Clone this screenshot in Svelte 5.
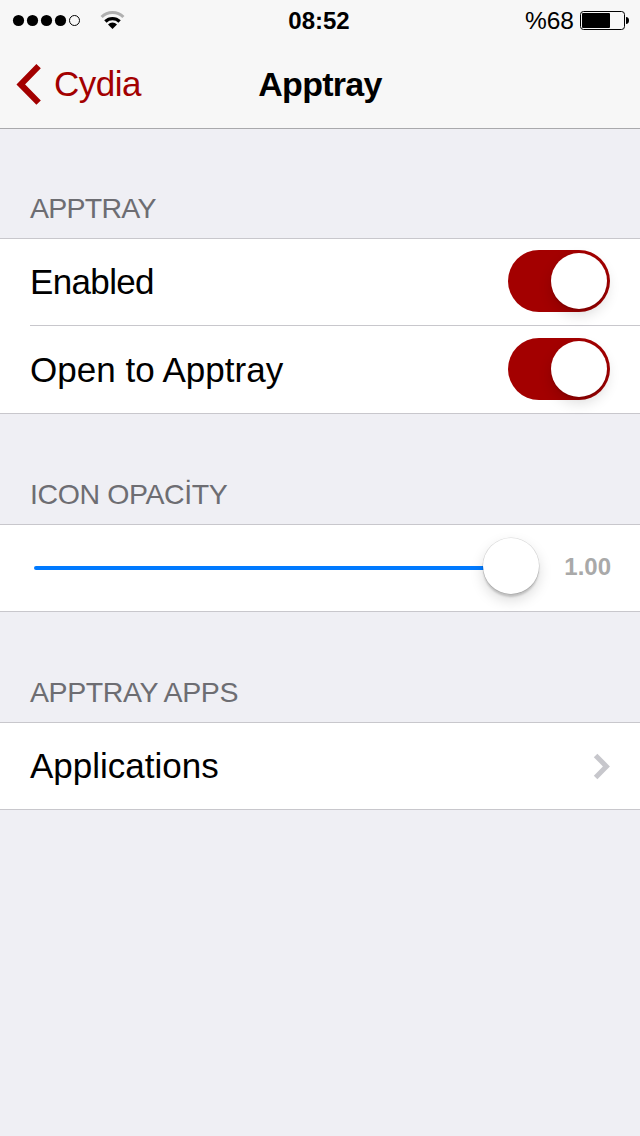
<script>
  let rows = $state([
    { label: 'Enabled', on: true, spacing: -0.65 },
    { label: 'Open to Apptray', on: true, spacing: 0.02 }
  ]);
  let opacity = $state(1);
</script>

<div class="screen">
  <header>
    <div class="status">
      <div class="signal">
        <svg width="130" height="40" viewBox="0 0 130 40">
          <circle cx="18.5" cy="20.5" r="5.6" />
          <circle cx="32.5" cy="20.5" r="5.6" />
          <circle cx="46.5" cy="20.5" r="5.6" />
          <circle cx="60.5" cy="20.5" r="5.6" />
          <circle cx="74.5" cy="20.5" r="5" fill="none" stroke="#000" stroke-width="1" />
          <path d="M101.6 17 A15.6 15.6 0 0 1 123.4 17" fill="none" stroke="#b0b0b0" stroke-width="3.1" />
          <path d="M105.4 21.5 A10 10 0 0 1 119.6 21.5" fill="none" stroke="#000" stroke-width="3.3" />
          <path d="M108 24.4 A6.2 6.2 0 0 1 117 24.4 L112.5 29 Z" />
        </svg>
      </div>
      <time>08:52</time>
      <div class="power">
        <span>%68</span>
        <svg width="50" height="20" viewBox="0 0 50 20">
          <rect x="0.5" y="1.5" width="44" height="18" rx="3" fill="none" stroke="#000" />
          <rect x="2" y="3" width="28" height="15" rx="1" />
          <path d="M46 7 Q49 7.4 49 10.5 Q49 13.6 46 14 Z" />
        </svg>
      </div>
    </div>
    <nav>
      <div class="back">
        <svg width="26" height="42" viewBox="0 0 26 42">
          <path d="M22.6 3.2 L4.8 21.4 L22.6 39.6" fill="none" stroke="#a30000" stroke-width="6.2" />
        </svg>
        <span>Cydia</span>
      </div>
      <h1>Apptray</h1>
      <div></div>
    </nav>
  </header>

  <h2 class="first">APPTRAY</h2>
  <section>
    {#each rows as row}
      <div class="row">
        <span class="label" style="letter-spacing: {row.spacing}px">{row.label}</span>
        <button class="switch" class:on={row.on} aria-label={row.label} onclick={() => (row.on = !row.on)}>
          <i></i>
        </button>
      </div>
    {/each}
  </section>

  <h2>ICON OPACİTY</h2>
  <section>
    <div class="row">
      <div class="slider">
        <div class="track"></div>
        <div class="knob"></div>
      </div>
      <span class="value">{opacity.toFixed(2)}</span>
    </div>
  </section>

  <h2>APPTRAY APPS</h2>
  <section>
    <div class="row">
      <span class="label">Applications</span>
      <svg class="chevron" width="18" height="28" viewBox="0 0 18 28">
        <path d="M3.6 3.4 L14.4 14.4 L3.6 25.4" fill="none" stroke="#c7c7cc" stroke-width="5" />
      </svg>
    </div>
  </section>
</div>

<style>
  :global(body) {
    margin: 0;
    background: #efeff4;
  }
  .screen {
    width: 640px;
    height: 1136px;
    overflow: hidden;
    background: #efeff4;
    color: #000;
    font-family: "Liberation Sans", Arial, sans-serif;
  }
  svg {
    display: block;
  }
  header {
    box-sizing: border-box;
    height: 129px;
    background: #f7f7f7;
    border-bottom: 1px solid #a9a9ac;
  }
  .status {
    display: grid;
    grid-template-columns: 1fr auto 1fr;
    height: 40px;
    line-height: 42px;
    font-size: 24.5px;
  }
  time {
    margin-right: 2px;
    font-size: 24px;
    font-weight: 700;
  }
  .power {
    display: flex;
    justify-content: flex-end;
    gap: 6px;
    padding-right: 10px;
  }
  .power svg {
    margin-top: 10px;
  }
  nav {
    display: grid;
    grid-template-columns: 1fr auto 1fr;
    height: 88px;
    line-height: 88px;
    font-size: 35px;
  }
  .back {
    display: flex;
    padding-left: 16px;
    color: #a30000;
    letter-spacing: -0.5px;
  }
  .back svg {
    margin: 23px 12px 0 0;
  }
  h1 {
    margin: 0;
    font-size: 34px;
    font-weight: 700;
    line-height: 89px;
    letter-spacing: -0.7px;
  }
  h2 {
    margin: 0;
    height: 110px;
    box-sizing: border-box;
    padding: 63px 0 0 30px;
    font-size: 28.5px;
    font-weight: 400;
    line-height: 34px;
    letter-spacing: -0.4px;
    color: #6d6d72;
    white-space: nowrap;
  }
  h2.first {
    height: 109px;
    padding-top: 62px;
    letter-spacing: -0.75px;
  }
  section {
    border-top: 1px solid #c8c7cc;
    border-bottom: 1px solid #c8c7cc;
    background: #fff;
  }
  .row {
    display: flex;
    justify-content: space-between;
    align-items: center;
    height: 86px;
    margin-left: 30px;
    padding-right: 30px;
  }
  .row + .row {
    height: 87px;
    border-top: 1px solid #c8c7cc;
  }
  .label {
    font-size: 35px;
    line-height: 86px;
  }
  .switch {
    box-sizing: border-box;
    width: 102px;
    height: 62px;
    margin-top: -2px;
    padding: 3px;
    border: 0;
    border-radius: 31px;
    background: #e5e5ea;
    display: flex;
  }
  .switch.on {
    justify-content: flex-end;
    background: #a30000;
  }
  .switch i {
    width: 56px;
    height: 56px;
    border-radius: 50%;
    background: #fff;
    box-shadow: 0 6px 14px rgba(0, 0, 0, 0.14), 0 2px 2px rgba(0, 0, 0, 0.12);
  }
  .slider {
    display: flex;
    align-items: center;
    width: 505px;
    height: 56px;
    margin: -4px 0 0 4px;
  }
  .track {
    width: 453px;
    height: 4px;
    border-radius: 2px;
    margin: 4px -4px 0 0;
    background: #007aff;
  }
  .knob {
    position: relative;
    width: 56px;
    height: 56px;
    border-radius: 50%;
    background: #fff;
    box-shadow: 0 0 0 0.5px rgba(0, 0, 0, 0.14), 0 6px 14px rgba(0, 0, 0, 0.15), 0 3px 2px rgba(0, 0, 0, 0.16);
  }
  .value {
    margin: -2px -1px 0 0;
    font-size: 24px;
    font-weight: 700;
    color: #a9a9a9;
  }
</style>
